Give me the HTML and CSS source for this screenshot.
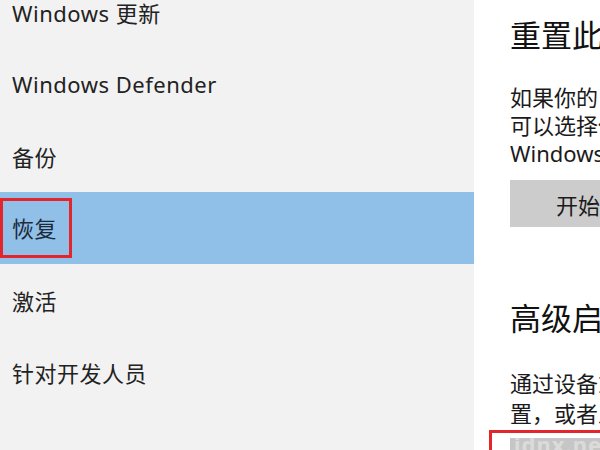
FILE: index.html
```html
<!DOCTYPE html>
<html lang="zh-CN">
<head>
  <meta charset="UTF-8" />
  <title>设置 - 更新和安全</title>
  <link rel="stylesheet" href="styles.css">
</head>
<body>
  <div class="window">

    <!-- left nav -->
    <aside class="sidebar">
      <div class="nav-list">
        <div class="nav-item">Windows 更新</div>
        <div class="nav-item">Windows Defender</div>
        <div class="nav-item">备份</div>
        <div class="nav-item selected"><span class="label">恢复</span></div>
        <div class="nav-item">激活</div>
        <div class="nav-item">针对开发人员</div>
      </div>
    </aside>

    <!-- right pane -->
    <main class="content">
      <h2>重置此电脑</h2>
      <p>如果你的电脑未正常运行，重置电脑可能会解决问题。重置时，你<br>可以选择保留个人文件或删除个人文件，然后重新安装<br>Windows。</p>
      <button class="btn">开始</button>

      <h2 class="second">高级启动</h2>
      <p class="loose">通过设备或磁盘（如 U 盘或 DVD）启动，更改 Windows 启动设<br>置，或者从系统映像中还原 Windows。这将重新启动电脑。</p>
      <div class="highlight">
        <button class="btn">立即重启</button>
        <span class="watermark">jdnx.net</span>
      </div>
    </main>

  </div>
</body>
</html>
```

FILE: styles.css
```css
* {
  margin: 0;
  padding: 0;
  box-sizing: border-box;
}

html, body {
  height: 100%;
}

body {
  font-family: "Noto Sans", "Noto Sans CJK SC", sans-serif;
  color: #1b1b1b;
  overflow: hidden;
  background-color: #fff;
}

.window {
  display: flex;
  height: 450px;
}

.sidebar {
  width: 474px;
  flex-shrink: 0;
  background-color: #f2f2f2;
  overflow: hidden;
}

.nav-list {
  margin-top: -24px;
}

.nav-item {
  height: 72px;
  display: flex;
  align-items: center;
  padding-left: 12px;
  font-size: 22px;
  letter-spacing: 0.5px;
  color: #222;
  white-space: nowrap;
}

.nav-item.selected {
  background-color: #90bfe8;
}

.nav-item.selected .label {
  margin-left: -12px;
  border: 3px solid #e3262c;
  padding: 0 12px 0 9px;
  line-height: 54px;
  color: #1c2a3a;
}

.content {
  flex: 1;
  padding: 15px 0 0 36px;
  white-space: nowrap;
  overflow: hidden;
}

h2 {
  font-size: 31px;
  font-weight: 400;
  line-height: 40px;
  color: #111;
}

h2.second {
  margin-top: 71px;
}

p {
  margin-top: 28px;
  font-size: 22px;
  line-height: 28px;
  color: #1b1b1b;
}

p.loose {
  margin-top: 30px;
  line-height: 30px;
}

.btn {
  display: block;
  margin-top: 13px;
  width: 136px;
  height: 47px;
  border: none;
  background-color: #cccccc;
  font-family: "Noto Sans CJK SC", sans-serif;
  font-size: 22px;
  color: #1b1b1b;
}

.highlight {
  position: relative;
  margin: 2px 0 0 -21px;
  border: 3px solid #e3262c;
  padding: 5px 18px 6px;
  width: 300px;
}

.highlight .btn {
  margin-top: 0;
  background-color: #c6c6c6;
  padding-top: 40px;
}

.watermark {
  position: absolute;
  left: 22px;
  top: -4px;
  font-size: 22px;
  font-weight: 700;
  color: rgba(255, 255, 255, 0.4);
  letter-spacing: 1px;
}
```
